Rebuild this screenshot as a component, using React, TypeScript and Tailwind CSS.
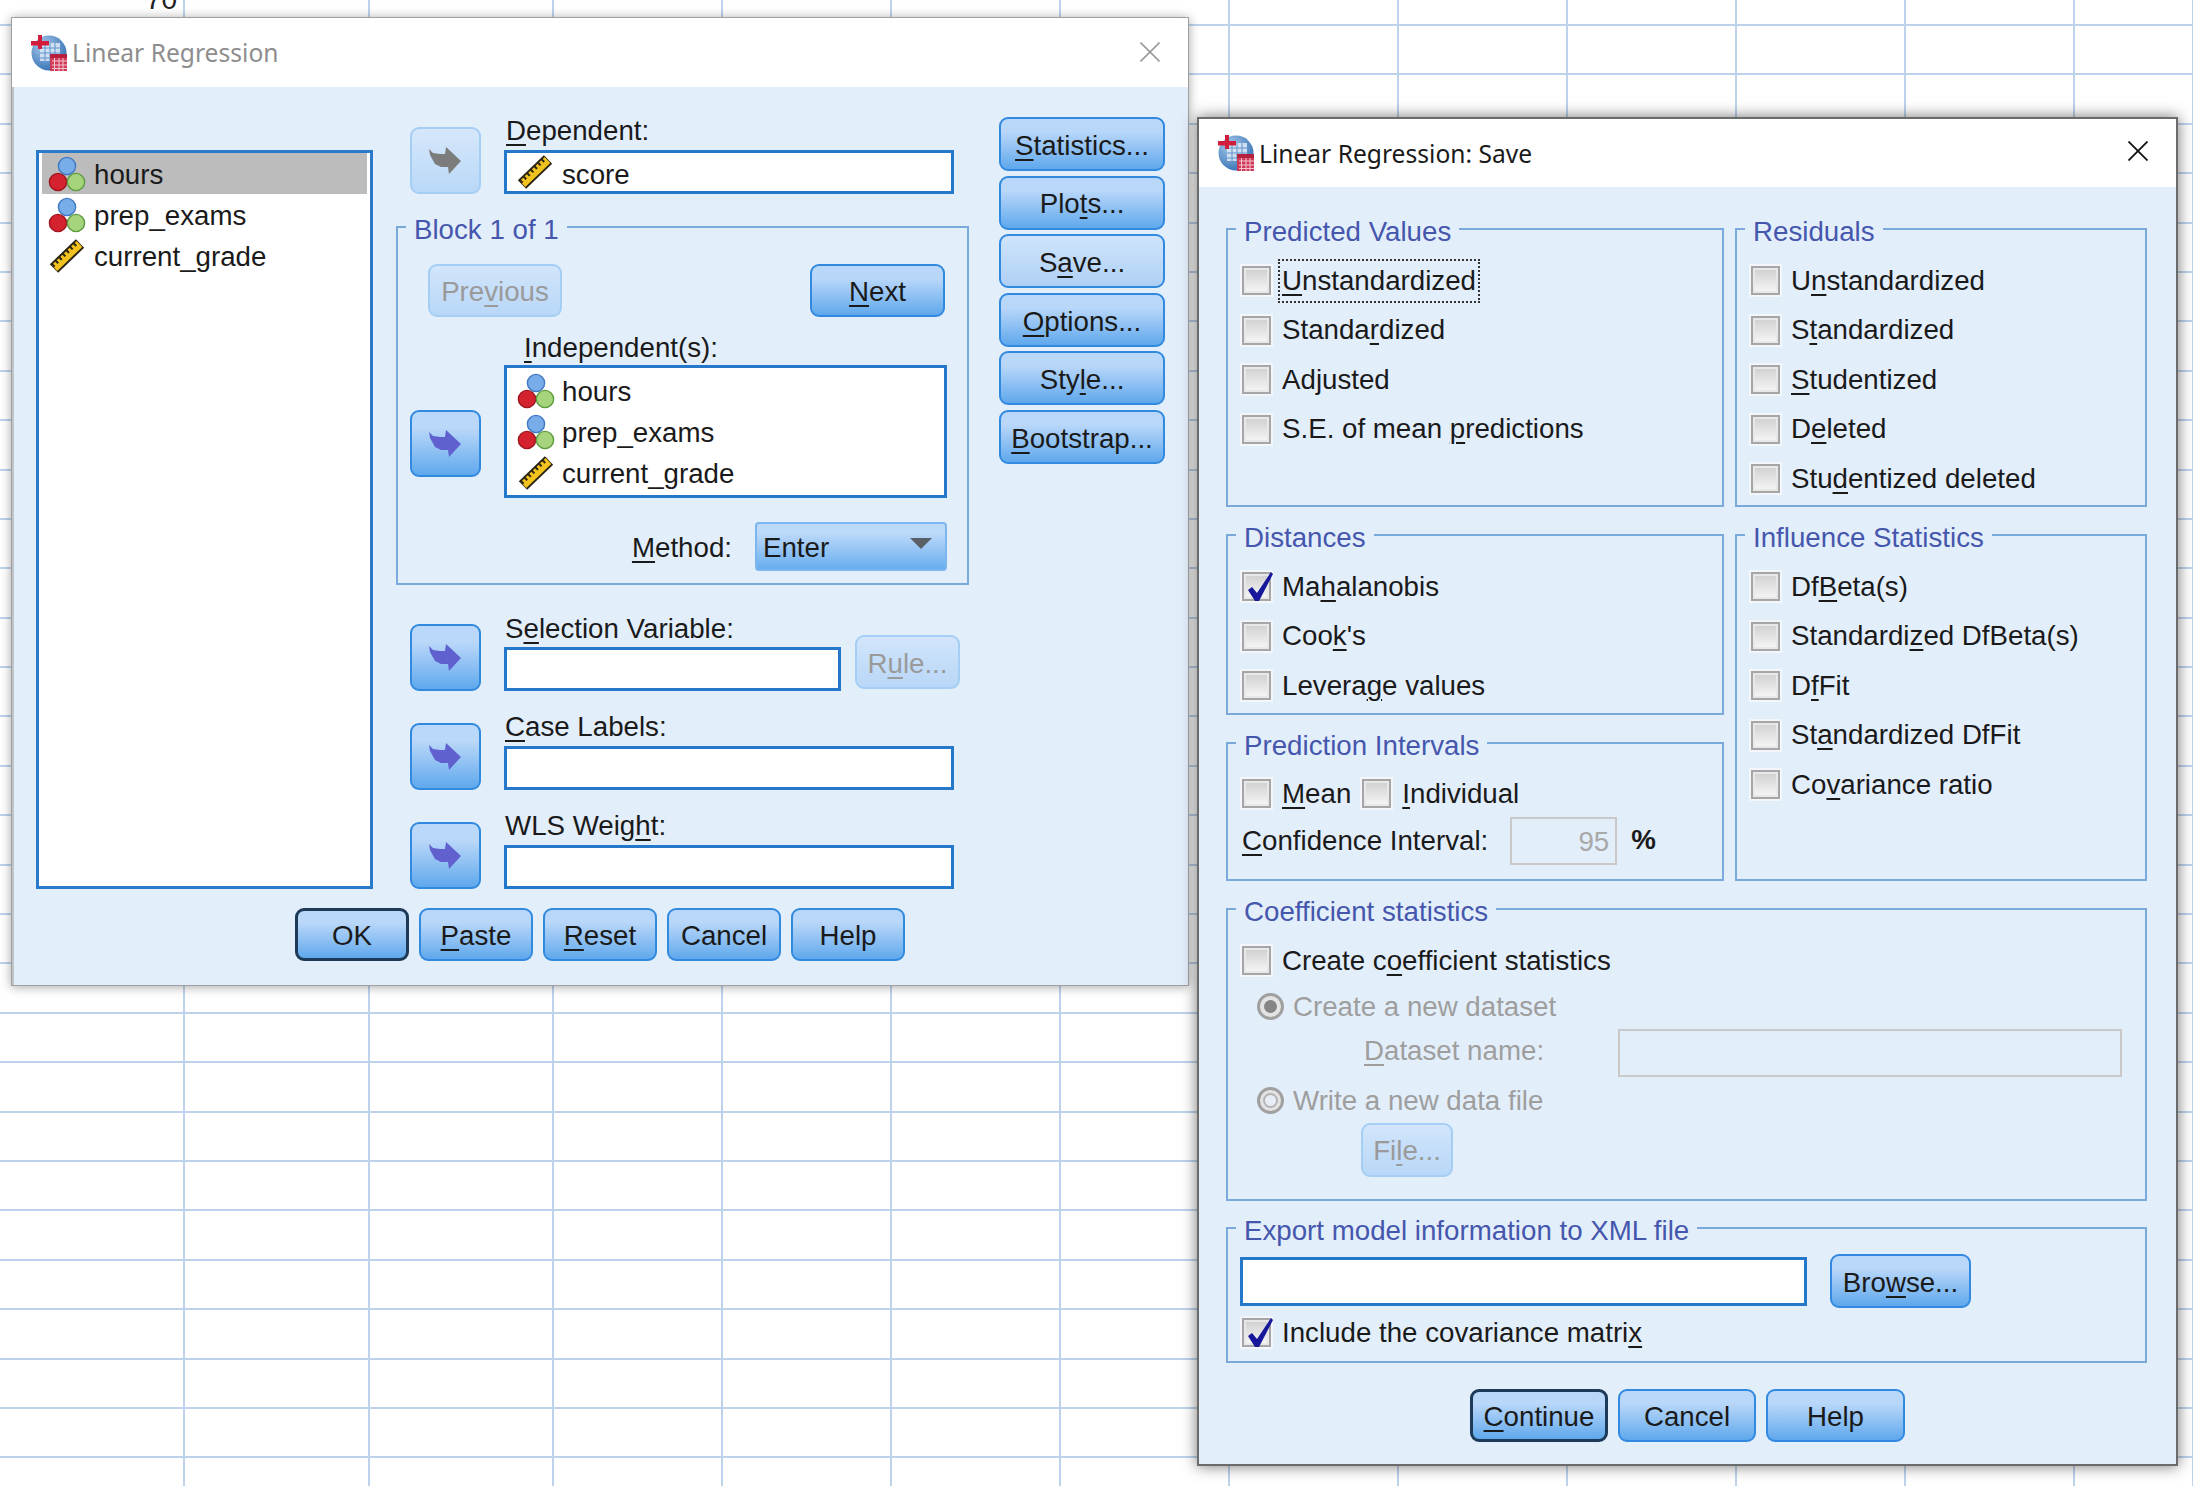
import React from "react";

const U = ({ children }: { children: React.ReactNode }) => (
  <span className="underline decoration-2 underline-offset-[4px]">{children}</span>
);

const colWidths = [185, 185, 184, 169, 169, 169, 169, 169, 169, 169, 169, 169, 119];

function SheetGrid() {
  return (
    <div className="-mt-[23.4px]">
      {Array.from({ length: 32 }).map((_, r) => (
        <div key={r} className="flex">
          {colWidths.map((w, c) => (
            <div
              key={c}
              style={{ width: w }}
              className="flex h-[49.4px] shrink-0 items-center justify-end border-r-2 border-b-2 border-[#bdd3ec] pr-[6px] text-[28px] text-[#222]"
            >
              {r === 0 && c === 0 ? "70" : null}
            </div>
          ))}
        </div>
      ))}
    </div>
  );
}

function AppIcon() {
  return (
    <svg viewBox="0 0 36 36" className="h-[36px] w-[36px] shrink-0">
      <defs>
        <radialGradient id="gl" cx="35%" cy="30%" r="80%">
          <stop offset="0%" stopColor="#a9c9ec" />
          <stop offset="100%" stopColor="#2c6cb0" />
        </radialGradient>
      </defs>
      <circle cx="18" cy="18" r="17.5" fill="url(#gl)" />
      <rect x="9" y="8" width="20" height="18" fill="#dfeaf6" opacity="0.85" />
      <path d="M9 13H29M9 18H29M9 23H29M14 8V26M19 8V26M24 8V26" stroke="#5e93cc" strokeWidth="1" />
      <rect x="7" y="0" width="4" height="14" fill="#d21c3c" />
      <rect x="0" y="6" width="18" height="4.5" fill="#d21c3c" />
      <rect x="19" y="19" width="17" height="17" fill="#cf3a58" />
      <rect x="19" y="19" width="17" height="4" fill="#b71f3e" />
      <path d="M21 26H36M21 30H36M21 33.5H36M23.5 23V36M28 23V36M32 23V36" stroke="#f4c4cf" strokeWidth="1" />
    </svg>
  );
}

function Nominal() {
  return (
    <svg viewBox="0 0 38 36" className="h-[36px] w-[38px] shrink-0">
      <circle cx="19" cy="10" r="8.6" fill="#79ade9" stroke="#3f79c4" strokeWidth="1.4" />
      <circle cx="10" cy="26" r="8.6" fill="#d4222f" stroke="#a01620" strokeWidth="1.4" />
      <circle cx="28" cy="26" r="8.6" fill="#a6d47c" stroke="#5d9c3f" strokeWidth="1.4" />
    </svg>
  );
}

function Ruler() {
  return (
    <svg viewBox="0 0 38 36" className="h-[36px] w-[38px] shrink-0">
      <line x1="6" y1="30.5" x2="32" y2="5.5" stroke="#2a2412" strokeWidth="12" />
      <line x1="6.5" y1="30" x2="31.5" y2="6" stroke="#f2c21f" strokeWidth="8" />
      <line x1="4.5" y1="28" x2="30" y2="3.5" stroke="#2a2412" strokeWidth="4" strokeDasharray="2 3" />
    </svg>
  );
}

function Arrow({ off }: { off?: boolean }) {
  return (
    <svg viewBox="0 0 33 28" className="h-[28px] w-[33px]">
      <polygon
        points="0,2 4,6 11,7 16,7 17,0 32,14 20,27 19,20 12,20 6,17 1,8"
        fill={off ? "#7c7c7c" : "#6061cf"}
      />
    </svg>
  );
}

function ArrowBtn({ off }: { off?: boolean }) {
  return (
    <div
      className={
        off
          ? "flex h-[67px] w-[71px] shrink-0 items-center justify-center rounded-[9px] border-2 border-[#a5cef5] bg-linear-to-b from-[#d6e7fb] to-[#b9d8f7]"
          : "flex h-[67px] w-[71px] shrink-0 items-center justify-center rounded-[9px] border-2 border-[#3189e0] bg-linear-to-b from-[#bad8f9] from-25% to-[#5ea8ec]"
      }
    >
      <Arrow off={off} />
    </div>
  );
}

type BtnKind = "normal" | "light" | "off" | "def";
const btnClasses: Record<BtnKind, string> = {
  normal: "border-2 border-[#3189e0] bg-linear-to-b from-[#b9d7f9] from-25% to-[#5ea8ec] text-[#1a1a1a]",
  light: "border-2 border-[#3189e0] bg-linear-to-b from-[#d0e4fb] to-[#aed0f5] text-[#1a1a1a]",
  off: "border-2 border-[#a5cef5] bg-linear-to-b from-[#d2e5fb] to-[#b8d7f7] text-[#9a9a9a]",
  def: "border-[3px] border-[#1d3a58] bg-linear-to-b from-[#b9d7f9] from-25% to-[#5ea8ec] text-[#1a1a1a]",
};

function Btn({
  kind = "normal",
  className,
  children,
}: {
  kind?: BtnKind;
  className: string;
  children: React.ReactNode;
}) {
  return (
    <div className={`flex shrink-0 items-center justify-center rounded-[9px] pt-[3px] ${btnClasses[kind]} ${className}`}>
      {children}
    </div>
  );
}

function Field({ className, children }: { className: string; children?: React.ReactNode }) {
  return (
    <div className={`flex items-center border-[3px] border-[#2577c9] bg-white ${className}`}>{children}</div>
  );
}

function VarRow({ name, kind, selected, wide }: { name: string; kind: "n" | "s"; selected?: boolean; wide?: boolean }) {
  return (
    <div className={`flex h-[41px] items-center ${selected ? "bg-[#bcbcbc]" : ""} ${wide ? "pl-[10px] gap-[7px]" : "pl-[6px] gap-[8px]"}`}>
      {kind === "n" ? <Nominal /> : <Ruler />}
      <span className="pt-[2px] text-[#1a1a1a]">{name}</span>
    </div>
  );
}

function Group({
  title,
  className,
  children,
}: {
  title: string;
  className: string;
  children?: React.ReactNode;
}) {
  return (
    <div className={`relative border-2 border-[#7aa9dc] ${className}`}>
      <span className="absolute -top-[14px] left-[8px] h-[26px] bg-[#e3eefb] px-[8px] pt-[2px] leading-[28px] text-[#4557ad]">
        {title}
      </span>
      {children}
    </div>
  );
}

function Check({ checked }: { checked?: boolean }) {
  return (
    <div className="relative h-[29px] w-[29px] shrink-0 border-2 border-[#a6a6a6] bg-linear-to-b from-[#cfcfcf] to-[#f7f7f7] shadow-[inset_0_0_0_2px_#e8e8e8] outline-2 outline-[#f3f7fc]">
      {checked ? (
        <svg viewBox="0 0 32 30" className="absolute -left-[2px] -top-[2px] h-[30px] w-[32px]">
          <polygon points="6,18 10,15 15,21 29,0 31,2 17,29 13,29" fill="#17179b" />
        </svg>
      ) : null}
    </div>
  );
}

function CheckRow({
  children,
  checked,
  focus,
}: {
  children: React.ReactNode;
  checked?: boolean;
  focus?: boolean;
}) {
  return (
    <div className="flex h-[49.5px] items-center">
      <Check checked={checked} />
      <span
        className={
          focus
            ? "ml-[7px] px-[4px] py-[6px] leading-[32px] text-[#1a1a1a] outline-2 -outline-offset-2 outline-dotted outline-[#333]"
            : "ml-[11px] leading-[32px] text-[#1a1a1a]"
        }
      >
        {children}
      </span>
    </div>
  );
}

function Radio({ on }: { on?: boolean }) {
  return (
    <div className="flex h-[27px] w-[27px] shrink-0 items-center justify-center rounded-full border-[3px] border-[#a0a0a0] bg-[#e4e4e4]">
      <div className={on ? "h-[13px] w-[13px] rounded-full bg-[#858585]" : "h-[15px] w-[15px] rounded-full border-2 border-[#b4b4b4] bg-[#e8eef5]"} />
    </div>
  );
}

function LeftDialog() {
  return (
    <div className="absolute left-[11px] top-[17px] flex h-[969px] w-[1178px] flex-col border border-[#a0a0a0] shadow-[0_1px_10px_rgba(0,0,0,0.35)]">
      <div className="flex h-[69px] items-center bg-white pl-[19px] pr-[28px]">
        <AppIcon />
        <span className="ml-[5px] flex-1 pt-[2px] font-['Noto_Sans',sans-serif] text-[24.6px] text-[#8d8d8d]">Linear Regression</span>
        <svg viewBox="0 0 20 20" className="-mt-[2px] h-[20px] w-[20px]">
          <path d="M0.5 0.5L19.5 19.5M19.5 0.5L0.5 19.5" stroke="#9a9a9a" strokeWidth="1.6" />
        </svg>
      </div>
      <div className="flex flex-1 flex-col border-l-2 border-[#bfc4ca] bg-[#e3eefb] pl-[22px] pt-[30px]">
        <div className="flex h-[772px] items-start">
          <div className="mt-[33px] h-[739px] w-[337px] shrink-0 border-[3px] border-[#2a7ac9] bg-white px-[3px] py-0">
            <VarRow name="hours" kind="n" selected />
            <VarRow name="prep_exams" kind="n" />
            <VarRow name="current_grade" kind="s" />
          </div>
          <div className="ml-[23px] w-[573px] shrink-0">
            {/* dependent */}
            <div className="flex h-[109px] items-start pl-[14px]">
              <div className="mt-[10px]">
                <ArrowBtn off />
              </div>
              <div className="ml-[23px] w-[450px]">
                <div className="h-[27px] pl-[2px] leading-[27px]">
                  <U>D</U>ependent:
                </div>
                <Field className="mt-[6px] h-[44px] w-[450px]">
                  <div className="pl-[9px]">
                    <Ruler />
                  </div>
                  <span className="ml-[8px] pt-[5px]">score</span>
                </Field>
              </div>
            </div>
            {/* block */}
            <Group title="Block 1 of 1" className="h-[359px] w-[573px]">
              <div className="ml-[30px] mr-[22px] mt-[36px] flex h-[53px] justify-between">
                <Btn kind="off" className="h-[53px] w-[134px]">
                  Pre<U>v</U>ious
                </Btn>
                <Btn className="h-[53px] w-[135px]">
                  <U>N</U>ext
                </Btn>
              </div>
              <div className="ml-[126px] mt-[15px] h-[34px] leading-[32px]">
                <U>I</U>ndependent(s):
              </div>
              <div className="mt-[-1px] flex items-start pl-[12px]">
                <div className="mt-[45px]">
                  <ArrowBtn />
                </div>
                <div className="ml-[23px] h-[133px] w-[443px] border-[3px] border-[#2577c9] bg-white pt-[2px]">
                  <VarRow name="hours" kind="n" wide />
                  <VarRow name="prep_exams" kind="n" wide />
                  <VarRow name="current_grade" kind="s" wide />
                </div>
              </div>
              <div className="mt-[24px] flex h-[49px] items-center justify-end pr-[20px]">
                <span className="pt-[2px]">
                  <U>M</U>ethod:
                </span>
                <div className="ml-[23px] flex h-[49px] w-[192px] items-center justify-between rounded-[4px] border-2 border-[#7cb6ef] bg-linear-to-b from-[#bcd9f9] from-20% to-[#66adee] pl-[6px] pr-[13px]">
                  <span className="pt-[3px]">Enter</span>
                  <svg viewBox="0 0 22 11" className="-mt-[6px] h-[11px] w-[22px]">
                    <polygon points="0,0 22,0 11,11" fill="#5b5f66" />
                  </svg>
                </div>
              </div>
            </Group>
            {/* selection */}
            <div className="mt-[29px] flex h-[77px] items-end pl-[14px]">
              <ArrowBtn />
              <div className="ml-[23px]">
                <div className="h-[28px] pl-[1px] pt-[1px] leading-[28px]">
                  S<U>e</U>lection Variable:
                </div>
                <div className="mt-[5px] flex h-[44px] items-start">
                  <Field className="h-[44px] w-[337px]" />
                  <Btn kind="off" className="-mt-[12px] ml-[14px] h-[54px] w-[105px]">
                    R<U>u</U>le...
                  </Btn>
                </div>
              </div>
            </div>
            {/* case */}
            <div className="mt-[21px] flex h-[78px] items-end pl-[14px]">
              <ArrowBtn />
              <div className="ml-[23px]">
                <div className="h-[28px] pl-[1px] pt-[1px] leading-[28px]">
                  <U>C</U>ase Labels:
                </div>
                <Field className="mt-[6px] h-[44px] w-[450px]" />
              </div>
            </div>
            {/* wls */}
            <div className="mt-[21px] flex h-[78px] items-end pl-[14px]">
              <ArrowBtn />
              <div className="ml-[23px]">
                <div className="h-[28px] pl-[1px] pt-[1px] leading-[28px]">
                  WLS Weig<U>h</U>t:
                </div>
                <Field className="mt-[6px] h-[44px] w-[450px]" />
              </div>
            </div>
          </div>
          {/* right buttons */}
          <div className="ml-[30px] flex w-[166px] shrink-0 flex-col gap-[4.6px]">
            <Btn className="h-[54px] w-[166px]">
              <U>S</U>tatistics...
            </Btn>
            <Btn className="h-[54px] w-[166px]">
              Plo<U>t</U>s...
            </Btn>
            <Btn kind="light" className="h-[54px] w-[166px]">
              S<U>a</U>ve...
            </Btn>
            <Btn className="h-[54px] w-[166px]">
              <U>O</U>ptions...
            </Btn>
            <Btn className="h-[54px] w-[166px]">
              Sty<U>l</U>e...
            </Btn>
            <Btn className="h-[54px] w-[166px]">
              <U>B</U>ootstrap...
            </Btn>
          </div>
        </div>
        <div className="ml-[259px] mt-[19px] flex gap-[10px]">
          <Btn kind="def" className="h-[53px] w-[114px]">
            OK
          </Btn>
          <Btn className="h-[53px] w-[114px]">
            <U>P</U>aste
          </Btn>
          <Btn className="h-[53px] w-[114px]">
            <U>R</U>eset
          </Btn>
          <Btn className="h-[53px] w-[114px]">Cancel</Btn>
          <Btn className="h-[53px] w-[114px]">Help</Btn>
        </div>
      </div>
    </div>
  );
}

function RightDialog() {
  return (
    <div className="absolute left-[1197px] top-[117px] flex h-[1349px] w-[981px] flex-col border-2 border-[#6b6b6b] shadow-[0_0_14px_rgba(0,0,0,0.55)]">
      <div className="flex h-[68px] items-center bg-white pl-[19px] pr-[28px]">
        <AppIcon />
        <span className="ml-[5px] flex-1 pt-[2px] font-['Noto_Sans',sans-serif] text-[24.6px] text-[#1a1a1a]">
          Linear Regression: Save
        </span>
        <svg viewBox="0 0 20 20" className="-mt-[4px] h-[20px] w-[20px]">
          <path d="M0.5 0.5L19.5 19.5M19.5 0.5L0.5 19.5" stroke="#111" strokeWidth="1.8" />
        </svg>
      </div>
      <div className="flex-1 bg-[#e3eefb] pl-[27px] pt-[41px]">
        <div className="flex gap-[11px]">
          <div className="flex w-[498px] flex-col gap-[27px]">
            <Group title="Predicted Values" className="h-[279px] pl-[14px] pt-[26px]">
              <CheckRow focus>
                <U>U</U>nstandardized
              </CheckRow>
              <CheckRow>
                Standa<U>r</U>dized
              </CheckRow>
              <CheckRow>
                Ad<U>j</U>usted
              </CheckRow>
              <CheckRow>
                S.E. of mean <U>p</U>redictions
              </CheckRow>
            </Group>
            <Group title="Distances" className="h-[181px] pl-[14px] pt-[26px]">
              <CheckRow checked>
                Ma<U>h</U>alanobis
              </CheckRow>
              <CheckRow>
                Coo<U>k</U>'s
              </CheckRow>
              <CheckRow>
                Levera<U>g</U>e values
              </CheckRow>
            </Group>
            <Group title="Prediction Intervals" className="h-[139px] pl-[14px] pt-[25px]">
              <div className="flex h-[49px] items-center">
                <Check />
                <span className="ml-[11px] pt-[1px]">
                  <U>M</U>ean
                </span>
                <div className="ml-[11px]">
                  <Check />
                </div>
                <span className="ml-[11px] pt-[1px]">
                  <U>I</U>ndividual
                </span>
              </div>
              <div className="-mt-[1px] flex h-[48px] items-center">
                <span>
                  <U>C</U>onfidence Interval:
                </span>
                <div className="ml-[22px] flex h-[48px] w-[107px] items-center justify-end border-2 border-[#c9c9c9] pr-[6px] pt-[2px] text-[#a8a8a8]">
                  95
                </div>
                <span className="ml-[14px] -mt-[3px] font-bold">%</span>
              </div>
            </Group>
          </div>
          <div className="flex w-[412px] flex-col gap-[27px]">
            <Group title="Residuals" className="h-[279px] pl-[14px] pt-[26px]">
              <CheckRow>
                U<U>n</U>standardized
              </CheckRow>
              <CheckRow>
                S<U>t</U>andardized
              </CheckRow>
              <CheckRow>
                <U>S</U>tudentized
              </CheckRow>
              <CheckRow>
                D<U>e</U>leted
              </CheckRow>
              <CheckRow>
                Stu<U>d</U>entized deleted
              </CheckRow>
            </Group>
            <Group title="Influence Statistics" className="h-[347px] pl-[14px] pt-[26px]">
              <CheckRow>
                Df<U>B</U>eta(s)
              </CheckRow>
              <CheckRow>
                Standardi<U>z</U>ed DfBeta(s)
              </CheckRow>
              <CheckRow>
                D<U>f</U>Fit
              </CheckRow>
              <CheckRow>
                St<U>a</U>ndardized DfFit
              </CheckRow>
              <CheckRow>
                Co<U>v</U>ariance ratio
              </CheckRow>
            </Group>
          </div>
        </div>
        <Group title="Coefficient statistics" className="mt-[27px] h-[293px] w-[921px] pl-[14px] pt-[26px]">
          <CheckRow>
            Create c<U>o</U>efficient statistics
          </CheckRow>
          <div className="flex h-[42px] items-center pl-[15px] text-[#9e9e9e]">
            <Radio on />
            <span className="ml-[9px]">Create a new dataset</span>
          </div>
          <div className="flex h-[50px] items-center pl-[122px] text-[#9e9e9e]">
            <span className="-mt-[4px] w-[254px]">
              <U>D</U>ataset name:
            </span>
            <div className="h-[48px] w-[504px] border-2 border-[#c9c9c9]" />
          </div>
          <div className="flex h-[46px] items-center pl-[15px] text-[#9e9e9e]">
            <Radio />
            <span className="ml-[9px]">Write a new data file</span>
          </div>
          <Btn kind="off" className="-mt-[1px] ml-[119px] h-[54px] w-[92px]">
            Fi<U>l</U>e...
          </Btn>
        </Group>
        <Group title="Export model information to XML file" className="mt-[26px] h-[136px] w-[921px] pl-[12px] pt-[25px]">
          <div className="flex items-center">
            <Field className="h-[49px] w-[567px]" />
            <Btn className="ml-[23px] h-[54px] w-[141px]">
              Bro<U>w</U>se...
            </Btn>
          </div>
          <div className="mt-0">
            <div className="flex h-[49.5px] items-center pl-[2px]">
              <Check checked />
              <span className="ml-[11px] pt-[1px]">
                Include the covariance matri<U>x</U>
              </span>
            </div>
          </div>
        </Group>
        <div className="ml-[244px] mt-[26px] flex gap-[10px]">
          <Btn kind="def" className="h-[53px] w-[138px]">
            <span>
              <U>C</U>ontinue
            </span>
          </Btn>
          <Btn className="h-[53px] w-[138px]">Cancel</Btn>
          <Btn className="h-[53px] w-[139px]">Help</Btn>
        </div>
      </div>
    </div>
  );
}

export default function App() {
  return (
    <div className="relative h-[1486px] w-[2193px] overflow-hidden bg-white font-['Liberation_Sans',Arial,sans-serif] text-[27.7px] text-[#1a1a1a]">
      <SheetGrid />
      <LeftDialog />
      <RightDialog />
    </div>
  );
}
